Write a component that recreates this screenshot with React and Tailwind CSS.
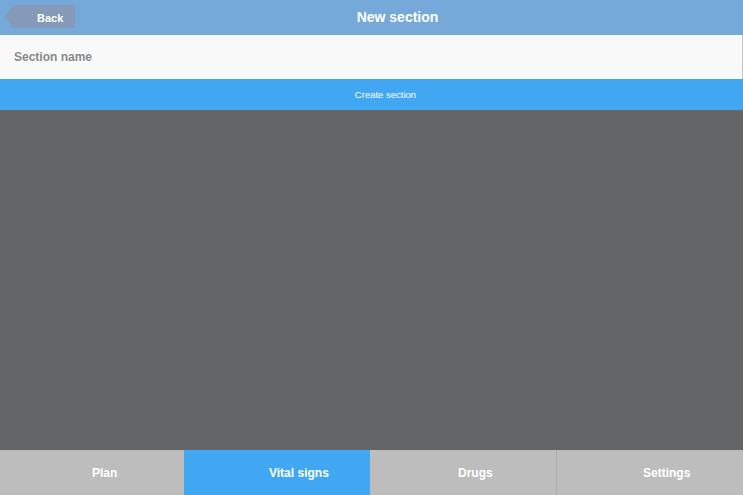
export default function App() {
  const font = { fontFamily: '"Liberation Sans", Arial, sans-serif' };
  return (
    <div className="w-[743px] h-[495px] flex flex-col overflow-hidden" style={font}>
      <div className="h-[35px] bg-[#74a9d9] flex items-center relative shrink-0">
        <div className="absolute left-[5px] top-[5px] h-[23px] flex">
          <svg width="8" height="23" viewBox="0 0 8 23" className="block">
            <polygon points="8,0 8,23 0,11.5" fill="#8599b8" />
          </svg>
          <div className="h-[23px] w-[62px] bg-[#8599b8] flex items-center pl-[24px] pt-[3px] text-white font-bold text-[11px]">
            Back
          </div>
        </div>
        <div className="flex-1 pl-[52px] text-center text-white font-bold text-[14px] leading-none pb-[2px]">
          New section
        </div>
      </div>
      <div className="h-[44px] bg-[#f9f9f9] flex items-center pl-[14px] pb-[1px] text-[#8a8a8a] font-bold text-[12px] border-r border-[#c4c4c4] shrink-0">
        Section name
      </div>
      <div className="h-[31px] bg-[#41a7f3] flex items-center justify-center pl-[28px] pt-[1px] text-white text-[9.5px] shrink-0">
        Create section
      </div>
      <div className="flex-1 bg-[#636466]" />
      <div className="h-[45px] flex bg-[#bdbdbd] text-white font-bold text-[12px] shrink-0">
        <div className="w-[184px] flex items-center pl-[92px]">Plan</div>
        <div className="w-[186px] bg-[#41a7f3] flex items-center pl-[85px]">Vital signs</div>
        <div className="w-[186px] flex items-center pl-[88px]">Drugs</div>
        <div className="flex-1 border-l border-[#afafaf] flex items-center pl-[86px]">Settings</div>
      </div>
    </div>
  );
}
